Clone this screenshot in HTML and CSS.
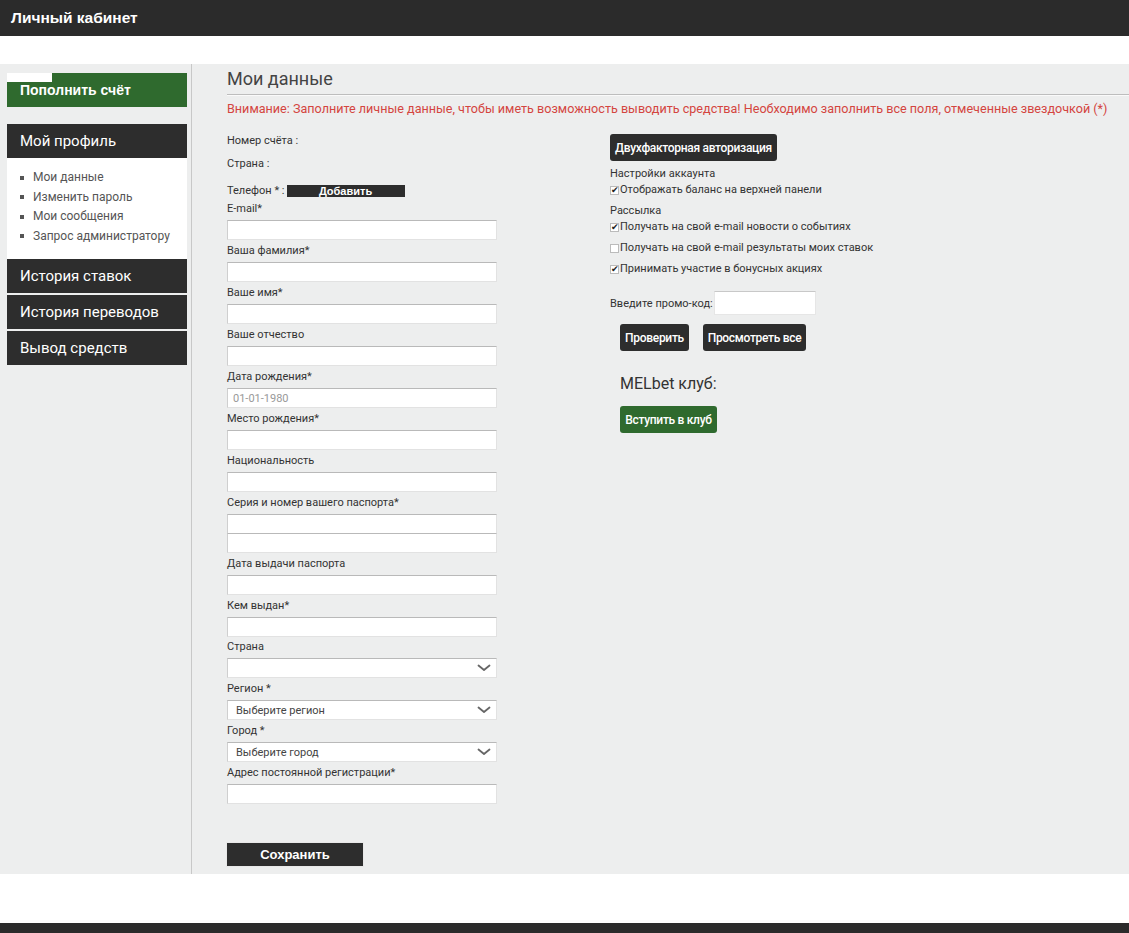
FILE: index.html
```html
<!DOCTYPE html>
<html lang="ru">
<head>
<meta charset="utf-8">
<title>Личный кабинет</title>
<link rel="stylesheet" href="styles.css">
</head>
<body>
<header class="topbar"><span class="topbar-title">Личный кабинет</span></header>
<div class="page">
  <aside class="sidebar">
    <a class="side-btn side-green" href="#"><span class="blot"></span>Пополнить счёт</a>
    <div class="side-group">
      <a class="side-btn side-dark" href="#">Мой профиль</a>
      <ul class="side-list">
        <li>Мои данные</li>
        <li>Изменить пароль</li>
        <li>Мои сообщения</li>
        <li>Запрос администратору</li>
      </ul>
      <a class="side-btn side-dark" href="#">История ставок</a>
      <a class="side-btn side-dark sep" href="#">История переводов</a>
      <a class="side-btn side-dark sep" href="#">Вывод средств</a>
    </div>
  </aside>
  <main class="main">
    <h1 class="title">Мои данные</h1>
    <p class="warning">Внимание: Заполните личные данные, чтобы иметь возможность выводить средства! Необходимо заполнить все поля, отмеченные звездочкой (*)</p>
    <div class="cols">
      <div class="col-left">
        <div class="info info-1">Номер счёта :</div>
        <div class="info info-2">Страна :</div>
        <div class="info info-3">Телефон * : <button class="add-btn">Добавить</button></div>
        <label class="lbl">E-mail*</label>
        <input class="inp" type="text">
        <label class="lbl">Ваша фамилия*</label>
        <input class="inp" type="text">
        <label class="lbl">Ваше имя*</label>
        <input class="inp" type="text">
        <label class="lbl">Ваше отчество</label>
        <input class="inp" type="text">
        <label class="lbl">Дата рождения*</label>
        <input class="inp" type="text" placeholder="01-01-1980">
        <label class="lbl">Место рождения*</label>
        <input class="inp" type="text">
        <label class="lbl">Национальность</label>
        <input class="inp" type="text">
        <label class="lbl">Серия и номер вашего паспорта*</label>
        <input class="inp" type="text">
        <input class="inp inp-joined" type="text">
        <label class="lbl">Дата выдачи паспорта</label>
        <input class="inp" type="text">
        <label class="lbl">Кем выдан*</label>
        <input class="inp" type="text">
        <label class="lbl lbl-tight">Страна</label>
        <div class="sel"><span class="sel-text"></span><svg class="chev" width="14" height="8" viewBox="0 0 14 8"><path d="M1.5 1.5 L7 6 L12.5 1.5" fill="none" stroke="#666" stroke-width="1.8" stroke-linecap="round" stroke-linejoin="round"/></svg></div>
        <label class="lbl">Регион *</label>
        <div class="sel"><span class="sel-text">Выберите регион</span><svg class="chev" width="14" height="8" viewBox="0 0 14 8"><path d="M1.5 1.5 L7 6 L12.5 1.5" fill="none" stroke="#666" stroke-width="1.8" stroke-linecap="round" stroke-linejoin="round"/></svg></div>
        <label class="lbl">Город *</label>
        <div class="sel"><span class="sel-text">Выберите город</span><svg class="chev" width="14" height="8" viewBox="0 0 14 8"><path d="M1.5 1.5 L7 6 L12.5 1.5" fill="none" stroke="#666" stroke-width="1.8" stroke-linecap="round" stroke-linejoin="round"/></svg></div>
        <label class="lbl">Адрес постоянной регистрации*</label>
        <input class="inp" type="text">
        <button class="save-btn">Сохранить</button>
      </div>
      <div class="col-right">
        <button class="dark-btn twofa">Двухфакторная авторизация</button>
        <div class="sub">Настройки аккаунта</div>
        <div class="chk-row"><span class="chk on"></span>Отображать баланс на верхней панели</div>
        <div class="sub sub-2">Рассылка</div>
        <div class="chk-row"><span class="chk on"></span>Получать на свой e-mail новости о событиях</div>
        <div class="chk-row"><span class="chk"></span>Получать на свой e-mail результаты моих ставок</div>
        <div class="chk-row"><span class="chk on"></span>Принимать участие в бонусных акциях</div>
        <div class="promo"><span class="promo-lbl">Введите промо-код:</span><input class="promo-inp" type="text"></div>
        <div class="promo-btns">
          <button class="dark-btn btn-check">Проверить</button>
          <button class="dark-btn btn-all">Просмотреть все</button>
        </div>
        <div class="club">MELbet клуб:</div>
        <button class="green-btn">Вступить в клуб</button>
      </div>
    </div>
  </main>
</div>
<footer class="footer"></footer>
</body>
</html>
```
FILE: styles.css
```css
* { box-sizing: border-box; }
html, body { margin: 0; padding: 0; }
body {
  background: #fff;
  font-family: Roboto, "Open Sans", Arial, sans-serif;
  color: #333;
}
.topbar {
  height: 36px;
  background: #2b2b2b;
  display: flex;
  align-items: center;
  padding-left: 11px;
}
.topbar-title {
  color: #fff;
  font-weight: bold;
  font-size: 15.5px;
  font-family: "Liberation Sans", Arial, sans-serif;
}
.page {
  margin-top: 28px;
  background: #edeeee;
  display: grid;
  grid-template-columns: 192px 1fr;
}
.sidebar {
  border-right: 1px solid #c8c8c8;
  padding: 9px 4px 0 7px;
}
.side-btn {
  display: flex;
  align-items: center;
  height: 34px;
  width: 180px;
  padding-left: 13px;
  text-decoration: none;
  color: #fff;
  font-size: 15px;
}
.side-green {
  position: relative;
  background: #2f6a2e;
  font-weight: bold;
  font-size: 14px;
  font-family: "Liberation Sans", Arial, sans-serif;
}
.blot {
  position: absolute;
  left: 0;
  top: 0;
  width: 45px;
  height: 9px;
  background: #fff;
}
.side-group { margin-top: 17px; }
.side-dark { background: #2d2d2d; }
.sep { margin-top: 2px; }
.side-list {
  list-style: none;
  margin: 0;
  padding: 10px 0 13px 13px;
  background: #fff;
  width: 180px;
}
.side-list li {
  font-size: 12px;
  line-height: 19.5px;
  color: #555;
  display: flex;
  align-items: center;
}
.side-list li::before {
  content: "";
  width: 4px;
  height: 4px;
  background: #555;
  margin-right: 9px;
}
.main {
  padding: 3px 0 8px 35px;
}
.title {
  margin: 0;
  font-size: 18px;
  font-weight: normal;
  color: #444;
  line-height: 24px;
  padding-bottom: 3px;
  border-bottom: 1px solid #bdbdbd;
  box-shadow: 0 1px 0 #fafafa;
}
.warning {
  margin: 6px 0 0;
  font-size: 12.6px;
  line-height: 16px;
  color: #d4453f;
  white-space: nowrap;
}
.cols {
  display: grid;
  grid-template-columns: 270px 1fr;
  column-gap: 113px;
  margin-top: 17px;
}
.col-left { display: flex; flex-direction: column; }
.info { font-size: 11px; line-height: 14px; color: #333; }
.info-2 { margin-top: 9px; }
.info-3 { margin-top: 13px; display: flex; align-items: center; }
.add-btn {
  margin-left: 2px;
  width: 118px;
  height: 12px;
  padding: 0;
  border: none;
  background: #2d2d2d;
  color: #fff;
  font-size: 11px;
  font-weight: bold;
  line-height: 12px;
  font-family: "Liberation Sans", Arial, sans-serif;
}
.lbl {
  display: block;
  font-size: 11px;
  line-height: 14px;
  margin: 4px 0 4px;
  color: #333;
}
.lbl-tight { margin-top: 3px; }
.inp {
  display: block;
  width: 270px;
  height: 20px;
  border: 1px solid #e2e2e2;
  border-top-color: #b9b9b9;
  border-left-color: #cfcfcf;
  background: #fff;
  font-size: 11px;
  font-family: inherit;
  padding: 0 5px;
}
.inp-joined { margin-top: -1px; }
.inp::placeholder { color: #999; }
.sel {
  display: flex;
  align-items: center;
  justify-content: space-between;
  width: 270px;
  height: 20px;
  background: #fff;
  border: 1px solid #e2e2e2;
  border-top-color: #b9b9b9;
  border-left-color: #cfcfcf;
  padding: 0 5px 0 8px;
  font-size: 11px;
  color: #444;
}
.chev { display: block; }
.save-btn {
  margin-top: 39px;
  width: 136px;
  height: 23px;
  border: none;
  background: #2d2d2d;
  color: #fff;
  font-size: 13px;
  font-weight: bold;
  font-family: "Liberation Sans", Arial, sans-serif;
  box-shadow: 0 0 0 1px #e8e8e8;
}
.col-right { display: flex; flex-direction: column; align-items: flex-start; }
.dark-btn {
  height: 27px;
  border: none;
  border-radius: 3px;
  background: #2d2d2d;
  color: #fff;
  font-size: 12px;
  font-weight: 500;
  font-family: Roboto, Arial, sans-serif;
  letter-spacing: -0.3px;
  white-space: nowrap;
  padding: 0;
}
.twofa { width: 167px; }
.sub { font-size: 11px; line-height: 14px; margin-top: 6px; color: #333; }
.sub-2 { margin-top: 7px; }
.chk-row {
  font-size: 11px;
  line-height: 14px;
  color: #333;
  display: flex;
  align-items: center;
  margin-top: 2px;
}
.chk-row + .chk-row { margin-top: 7px; }
.chk {
  width: 9px;
  height: 9px;
  border: 1px solid #bbb;
  background: #fff;
  margin-right: 1px;
  position: relative;
}
.chk.on::after {
  content: "✔";
  position: absolute;
  left: 0;
  top: -3px;
  font-size: 9px;
  color: #222;
  line-height: 12px;
}
.promo { display: flex; align-items: center; margin-top: 15px; }
.promo-lbl { font-size: 11px; color: #333; margin-right: 1px; }
.promo-inp {
  width: 102px;
  height: 24px;
  border: 1px solid #e6e6e6;
  border-top-color: #c8c8c8;
  background: #fff;
}
.promo-btns { display: flex; gap: 14px; margin: 9px 0 0 10px; }
.btn-check { width: 69px; }
.btn-all { width: 103px; }
.club {
  margin: 23px 0 0 10px;
  font-size: 16px;
  line-height: 20px;
  color: #333;
}
.green-btn {
  margin: 12px 0 0 10px;
  width: 97px;
  height: 27px;
  border: none;
  border-radius: 3px;
  background: #2f6a2e;
  color: #fff;
  font-size: 12px;
  font-weight: 500;
  letter-spacing: -0.3px;
  white-space: nowrap;
  padding: 0;
  font-family: Roboto, Arial, sans-serif;
}
.footer {
  margin-top: 49px;
  height: 10px;
  background: #2b2b2b;
}
```
